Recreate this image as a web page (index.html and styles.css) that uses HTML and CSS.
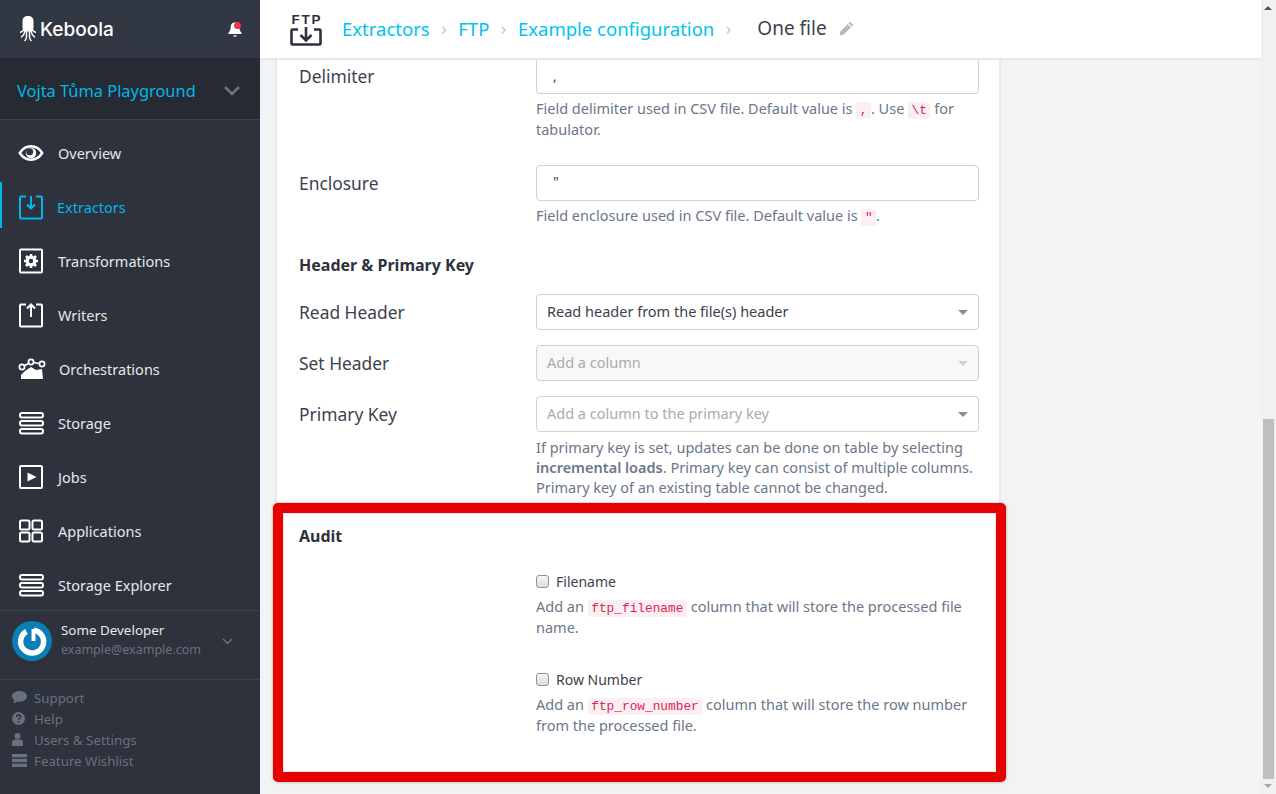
FILE: index.html
```html
<!DOCTYPE html>
<html lang="en">
<head>
    <meta charset="UTF-8">
    <title>Keboola - FTP extractor</title>
    <link rel="stylesheet" href="styles.css">
</head>
<body>
<div class="app">
    <aside class="sidebar">
        <div class="brand">
            <div class="logo">
                <svg class="octopus" width="16" height="26" viewBox="0 0 16 26" fill="#fff"><path d="M8 0c3.400 0 5.500 2 5.500 5v6.500c0 2-1 3.500-2.500 4H5c-1.500-.5-2.500-2-2.500-4V5C2.500 2 4.600 0 8 0z"/><path d="M6.500 15v6c0 1.500-.6 2.500-1.500 3.500M9.500 15v6c0 1.500 .6 2.500 1.500 3.500M5 15c-.4 2.500-1.700 4.500-3.500 6M11 15c.4 2.500 1.700 4.500 3.500 6M4 13.500c-1 1.500-2.200 2.300-3.500 2.800M12 13.500c1 1.500 2.200 2.300 3.500 2.800" fill="none" stroke="#fff" stroke-width="1.500" stroke-linecap="round"/></svg>
                <span class="logo-text">Keboola</span>
            </div>
            <span class="bell">
                <svg width="16" height="16" viewBox="0 0 16 16" fill="#fff"><path d="M8 1.500c-2.800 0-4.300 2-4.300 4.600 0 3-1 4.600-2.300 5.900v1h13.200v-1c-1.300-1.300-2.300-2.900-2.300-5.900C12.300 3.500 10.800 1.500 8 1.500z"/><path d="M6 14.500c.3 .8 1 1.300 2 1.300s1.700-.5 2-1.300z"/></svg>
                <span class="bell-dot"></span>
            </span>
        </div>
        <div class="project">
            <span>Vojta Tůma Playground</span>
            <svg width="18" height="11" viewBox="0 0 18 11" fill="none" stroke="#6b7480" stroke-width="2.600"><path d="M2 2l7 7 7-7"/></svg>
        </div>
        <nav class="nav">
            <a class="nav-item">
                <svg class="nav-icon" width="26" height="26" viewBox="0 0 26 26"><path d="M1.800 13C4.500 8.600 8.500 6.300 13 6.300s8.500 2.300 11.200 6.700c-2.700 4.400-6.700 6.700-11.200 6.700S4.500 17.400 1.800 13z" fill="none" stroke="#fff" stroke-width="2.400"/><circle cx="13" cy="13" r="5.200" fill="#fff"/><circle cx="11.700" cy="11.700" r="3.500" fill="#2d323c"/></svg>
                <span>Overview</span>
            </a>
            <a class="nav-item active">
                <svg class="nav-icon" width="26" height="26" viewBox="0 0 26 26" fill="none" stroke="#00b7ea" stroke-width="2"><path d="M8 2.500H3a1 1 0 0 0-1 1v20a1 1 0 0 0 1 1h20a1 1 0 0 0 1-1v-20a1 1 0 0 0-1-1h-5"/><path d="M13 2v12M9 10.500l4 4 4-4"/></svg>
                <span class="pull">Extractors</span>
            </a>
            <a class="nav-item">
                <svg class="nav-icon" width="26" height="26" viewBox="0 0 26 26"><rect x="2" y="1.500" width="22" height="23" rx="1" fill="none" stroke="#fff" stroke-width="2"/><circle cx="13" cy="13" r="3.800" fill="none" stroke="#fff" stroke-width="3.200"/><g stroke="#fff" stroke-width="2.600"><path d="M13 6v3M13 17v3M6 13h3M17 13h3M8 8l2 2M16 16l2 2M18 8l-2 2M10 16l-2 2"/></g></svg>
                <span>Transformations</span>
            </a>
            <a class="nav-item">
                <svg class="nav-icon" width="26" height="26" viewBox="0 0 26 26" fill="none" stroke="#fff" stroke-width="2"><path d="M8 2.500H3a1 1 0 0 0-1 1v20a1 1 0 0 0 1 1h20a1 1 0 0 0 1-1v-20a1 1 0 0 0-1-1h-5"/><path d="M13 15V2.500M9 6.500l4-4 4 4"/></svg>
                <span>Writers</span>
            </a>
            <a class="nav-item">
                <svg class="nav-icon wide" width="28" height="24" viewBox="0 0 28 24"><path d="M3 22v-4L7 14l6-4 5 3 6-1 1 10z" fill="#fff"/><path d="M4 10l9-5 11 2" fill="none" stroke="#fff" stroke-width="1.500"/><g fill="#2d323c" stroke="#fff" stroke-width="1.700"><circle cx="4" cy="10" r="2.600"/><circle cx="13" cy="5" r="2.600"/><circle cx="24" cy="7" r="2.600"/></g></svg>
                <span class="nudge">Orchestrations</span>
            </a>
            <a class="nav-item">
                <svg class="nav-icon" width="26" height="24" viewBox="0 0 26 24" fill="none" stroke="#fff" stroke-width="2"><rect x="2" y="2" width="23" height="4.500" rx="2"/><rect x="2" y="10" width="23" height="4.500" rx="2"/><rect x="2" y="18" width="23" height="4.500" rx="2"/></svg>
                <span>Storage</span>
            </a>
            <a class="nav-item">
                <svg class="nav-icon" width="26" height="26" viewBox="0 0 26 26"><rect x="2" y="2" width="22" height="22" rx="1" fill="none" stroke="#fff" stroke-width="2"/><path d="M9.500 8.500l9 4.500-9 4.500z" fill="#fff"/></svg>
                <span>Jobs</span>
            </a>
            <a class="nav-item">
                <svg class="nav-icon" width="26" height="24" viewBox="0 0 26 24" fill="none" stroke="#fff" stroke-width="2"><rect x="2" y="1.500" width="9.500" height="9" rx="1.500"/><rect x="14.500" y="1.500" width="9.500" height="9" rx="1.500"/><rect x="2" y="13.500" width="9.500" height="9" rx="1.500"/><rect x="14.500" y="13.500" width="9.500" height="9" rx="1.500"/></svg>
                <span>Applications</span>
            </a>
            <a class="nav-item">
                <svg class="nav-icon" width="26" height="24" viewBox="0 0 26 24" fill="none" stroke="#fff" stroke-width="2"><rect x="2" y="2" width="23" height="4.500" rx="2"/><rect x="2" y="10" width="23" height="4.500" rx="2"/><rect x="2" y="18" width="23" height="4.500" rx="2"/></svg>
                <span>Storage Explorer</span>
            </a>
        </nav>
        <div class="user">
            <svg class="avatar" width="40" height="40" viewBox="0 0 40 40"><circle cx="20" cy="20" r="20" fill="#0a7fb5"/><path d="M14.500 10.500A11.500 11.500 0 1 0 22 9.200" fill="none" stroke="#fff" stroke-width="5.500"/><path d="M21.500 8v12" stroke="#fff" stroke-width="4"/></svg>
            <div class="user-info">
                <div class="user-name">Some Developer</div>
                <div class="user-mail">example@example.com</div>
            </div>
            <svg class="user-caret" width="11" height="7" viewBox="0 0 11 7" fill="none" stroke="#6b7480" stroke-width="1.400"><path d="M1 1l4.500 4.500L10 1"/></svg>
        </div>
        <div class="links">
            <a class="link"><svg width="15" height="13" viewBox="0 0 15 13" fill="#68717d"><path d="M7.500 0C3.400 0 0 2.300 0 5.300c0 1.600 1 3 2.500 4-.2 1.100-.7 2.200-1.400 3 1.600-.2 3-.9 4-1.800.8.100 1.600.2 2.400.2 4.100 0 7.500-2.400 7.500-5.400S11.600 0 7.500 0z"/></svg>Support</a>
            <a class="link"><svg width="15" height="13" viewBox="0 0 15 13"><circle cx="6.500" cy="6.500" r="6.500" fill="#68717d"/><path d="M4.500 5c.1-1.300 1-1.900 2.100-1.900s2 .7 2 1.700c0 1.500-2 1.500-2 2.900" fill="none" stroke="#2d323c" stroke-width="1.500"/><rect x="5.800" y="9" width="1.600" height="1.600" fill="#2d323c"/></svg>Help</a>
            <a class="link"><svg width="15" height="13" viewBox="0 0 15 13" fill="#68717d"><circle cx="5.500" cy="3" r="3"/><path d="M0 13V9.500C0 7.500 1.500 6.500 3 6.500h5c1.500 0 3 1 3 3V13z"/></svg>Users &amp; Settings</a>
            <a class="link"><svg width="15" height="13" viewBox="0 0 15 13" fill="#68717d"><rect width="15" height="3.400"/><rect y="4.800" width="15" height="3.400"/><rect y="9.600" width="15" height="3.400"/></svg>Feature Wishlist</a>
        </div>
    </aside>

    <div class="main">
        <header class="topbar">
            <div class="ftp-icon">
                <span class="ftp-label">FTP</span>
                <svg width="32" height="19" viewBox="0 0 32 19" fill="none" stroke="#2d323c" stroke-width="2.600"><path d="M8 2.500H2.500a1 1 0 0 0-1 1v13a1 1 0 0 0 1 1h27a1 1 0 0 0 1-1v-13a1 1 0 0 0-1-1H24"/><path d="M16 0v12M10.500 8l5.500 5.500L21.500 8"/></svg>
            </div>
            <a class="crumb">Extractors</a>
            <span class="sep">›</span>
            <a class="crumb">FTP</a>
            <span class="sep">›</span>
            <a class="crumb">Example configuration</a>
            <span class="sep last">›</span>
            <span class="current">One file</span>
            <svg class="pencil" width="15" height="15" viewBox="0 0 15 15" fill="#b5b8bc"><path d="M11 .8l3.200 3.200-1.500 1.500-3.200-3.200zM8.600 3.200l3.200 3.200-7.400 7.400L.6 14.500l.7-3.900z"/></svg>
        </header>

        <div class="scroller">
            <div class="panel">
                <div class="form-row clipped">
                    <label class="row-label">Delimiter</label>
                    <div class="control">
                        <div class="input no-top">,</div>
                        <p class="help">Field delimiter used in CSV file. Default value is <code>,</code>. Use <code>\t</code> for tabulator.</p>
                    </div>
                </div>
                <div class="form-row last-field">
                    <label class="row-label">Enclosure</label>
                    <div class="control">
                        <div class="input">"</div>
                        <p class="help">Field enclosure used in CSV file. Default value is <code>"</code>.</p>
                    </div>
                </div>

                <h3 class="section-title">Header &amp; Primary Key</h3>

                <div class="form-row tight">
                    <label class="row-label">Read Header</label>
                    <div class="control">
                        <div class="select">Read header from the file(s) header</div>
                    </div>
                </div>
                <div class="form-row tight">
                    <label class="row-label">Set Header</label>
                    <div class="control">
                        <div class="select disabled">Add a column</div>
                    </div>
                </div>
                <div class="form-row tight">
                    <label class="row-label">Primary Key</label>
                    <div class="control">
                        <div class="select placeholder">Add a column to the primary key</div>
                        <p class="help narrow">If primary key is set, updates can be done on table by selecting <b>incremental loads</b>. Primary key can consist of multiple columns. Primary key of an existing table cannot be changed.</p>
                    </div>
                </div>

                <h3 class="section-title audit">Audit</h3>

                <div class="form-row check-row">
                    <div class="row-label"></div>
                    <div class="control">
                        <div class="check"><span class="box"></span>Filename</div>
                        <p class="help">Add an <code>ftp_filename</code> column that will store the processed file name.</p>
                    </div>
                </div>
                <div class="form-row check-row second">
                    <div class="row-label"></div>
                    <div class="control">
                        <div class="check"><span class="box"></span>Row Number</div>
                        <p class="help">Add an <code>ftp_row_number</code> column that will store the row number from the processed file.</p>
                    </div>
                </div>
            </div>
            <div class="highlight"></div>
        </div>
    </div>

    <div class="scrollbar">
        <span class="arrow up"></span>
        <div class="track"><div class="thumb"></div></div>
        <span class="arrow down"></span>
    </div>
</div>
</body>
</html>
```

FILE: styles.css
```css
* {
    box-sizing: border-box;
}
html, body {
    margin: 0;
    padding: 0;
    height: 100%;
    overflow: hidden;
}
body {
    font-family: "Noto Sans", sans-serif;
    font-size: 14px;
    color: #3b424d;
    background-color: #f2f3f5;
}
.app {
    display: flex;
    height: 794px;
}

/* sidebar */
.sidebar {
    width: 260px;
    flex: none;
    background-color: #2d323c;
    display: flex;
    flex-direction: column;
}
.brand {
    height: 58px;
    background-color: #323843;
    display: flex;
    align-items: center;
    justify-content: space-between;
    padding: 0 16px 0 20px;
}
.logo {
    display: flex;
    align-items: center;
    gap: 4px;
}
.logo-text {
    font-family: Inter, sans-serif;
    font-size: 19px;
    font-weight: 500;
    color: #fff;
}
.bell {
    position: relative;
    display: flex;
    margin-right: 1px;
}
.bell-dot {
    position: absolute;
    top: 1px;
    right: 2px;
    width: 7px;
    height: 7px;
    border-radius: 50%;
    background-color: #f4364c;
}
.project {
    height: 62px;
    background-color: #262a33;
    border-bottom: 1px solid #3d424c;
    display: flex;
    align-items: center;
    justify-content: space-between;
    padding: 3px 19px 0 17px;
    font-size: 16.400px;
    color: #00b7ea;
}
.nav {
    padding-top: 6px;
    height: 491px;
    border-bottom: 1px solid #3d424c;
}
.nav-item {
    height: 54px;
    display: flex;
    align-items: center;
    gap: 14px;
    padding-left: 18px;
    font-size: 14.500px;
    color: #e6e8ea;
}
.nav-item.active {
    color: #00b7ea;
    background: linear-gradient(#00b7ea, #00b7ea) no-repeat 0 2px / 2px 46px;
}
.nav-icon {
    flex: none;
}
.nav-icon.wide {
    margin-right: -1px;
}
.pull {
    margin-left: -1px;
}
.user {
    height: 69px;
    border-bottom: 1px solid #3d424c;
    display: flex;
    align-items: flex-start;
    padding: 9px 12px 0;
}
.avatar {
    margin-top: 1px;
}
.user-info {
    margin-left: 9px;
    flex: 1;
}
.user-name {
    font-size: 13.400px;
    line-height: 20px;
    color: #e6e8ea;
}
.user-mail {
    font-size: 12.500px;
    line-height: 19px;
    color: #68717d;
}
.user-caret {
    margin: 18px 15px 0 0;
}
.links {
    padding-top: 7px;
}
.link {
    display: flex;
    align-items: center;
    gap: 7px;
    padding-left: 12px;
    height: 21px;
    font-size: 13.300px;
    color: #68717d;
}

/* main column */
.main {
    flex: 1;
    min-width: 0;
    display: flex;
    flex-direction: column;
}
.topbar {
    height: 60px;
    flex: none;
    background-color: #fff;
    border-bottom: 2px solid #e8e9ec;
    display: flex;
    align-items: center;
    padding: 0 0 2px 30px;
    font-size: 18.500px;
}
.ftp-icon {
    width: 32px;
    display: flex;
    flex-direction: column;
    align-items: center;
    gap: 2px;
    margin-right: 20px;
    margin-top: 4px;
}
.ftp-label {
    font-family: "Liberation Sans", sans-serif;
    font-size: 13.500px;
    font-weight: 700;
    line-height: 11px;
    letter-spacing: 1.800px;
    margin-right: -1.800px;
    color: #2d323c;
}
.crumb {
    color: #00c3f0;
}
.sep {
    color: #c3c6ca;
    margin: 0 11.500px;
    font-size: 18px;
}
.sep.last {
    margin-right: 26px;
}
.current {
    color: #3b424d;
    font-size: 19px;
}
.pencil {
    margin-left: 12px;
}

.scroller {
    position: relative;
    flex: 1;
    overflow: hidden;
}
.panel {
    width: 726px;
    margin-left: 15px;
    height: 712px;
    background-color: #fff;
    border-left: 2px solid #e8e9ec;
    border-right: 2px solid #e8e9ec;
    padding: 0 22px;
}
.form-row {
    display: grid;
    grid-template-columns: 237px 443px;
    margin-bottom: 25px;
}
.form-row.last-field {
    margin-bottom: 28px;
}
.form-row.tight {
    margin-bottom: 15px;
}
.row-label {
    font-size: 17.400px;
    line-height: 36px;
    color: #3b424d;
}
.clipped .row-label {
    line-height: 33px;
}
.input {
    height: 36px;
    border: 1px solid #cfd2d6;
    border-radius: 4px;
    padding: 0 16px;
    line-height: 32px;
    font-size: 14px;
    background-color: #fff;
}
.input.no-top {
    height: 34px;
    border-top: none;
    border-radius: 0 0 4px 4px;
}
.help {
    margin: 4px 0 0;
    font-size: 14.500px;
    line-height: 21px;
    color: #6b7789;
}
.help.narrow {
    line-height: 20px;
    margin-top: 5px;
}
.help b {
    font-weight: 600;
}
code {
    font-family: "Liberation Mono", monospace;
    font-size: 12.800px;
    line-height: 1;
    color: #dd1f55;
    background-color: #fbeff2;
    border-radius: 3px;
    padding: 1px 3.500px;
}
.section-title {
    margin: 0;
    font-size: 16px;
    font-weight: 700;
    line-height: 22px;
    color: #2d323c;
    padding-bottom: 18px;
}
.select {
    position: relative;
    height: 36px;
    border: 1px solid #cfd2d6;
    border-radius: 4px;
    padding: 0 10px;
    line-height: 33px;
    font-size: 14.500px;
    color: #3b424d;
    background-color: #fff;
}
.select::after {
    content: "";
    position: absolute;
    right: 10px;
    top: 15px;
    border-top: 5px solid #8a8d91;
    border-left: 5px solid transparent;
    border-right: 5px solid transparent;
}
.select.placeholder {
    color: #a8abaf;
}
.select.disabled {
    color: #a8abaf;
    background-color: #f8f8f8;
}
.select.disabled::after {
    border-top-color: #cfd1d4;
}
.section-title.audit {
    margin-top: 28px;
    padding-bottom: 0;
}
.check-row {
    margin: 24px 0 0;
}
.check-row.second {
    margin-top: 31px;
}
.check-row .help {
    margin-top: 5px;
}
.check {
    display: flex;
    align-items: center;
    gap: 7px;
    height: 20px;
    color: #3b424d;
}
.box {
    width: 13px;
    height: 13px;
    border: 1px solid #8f9399;
    border-radius: 3px;
    background: linear-gradient(#f7f7f7, #dcdcdc);
}
.highlight {
    position: absolute;
    left: 13px;
    top: 443px;
    width: 733px;
    height: 279px;
    border: 10px solid #e60000;
    border-radius: 5px;
    box-shadow: 0 0 3px rgba(0, 0, 0, 0.35), inset 0 0 2px rgba(0, 0, 0, 0.3);
}

/* scrollbar */
.scrollbar {
    width: 15px;
    flex: none;
    background-color: #f1f1f1;
    display: flex;
    flex-direction: column;
    align-items: center;
    position: relative;
}
.track {
    flex: 1;
    width: 100%;
    position: relative;
}
.thumb {
    position: absolute;
    left: 2px;
    top: 419px;
    width: 11px;
    height: 360px;
    background-color: #bfbfbf;
}
.arrow {
    position: absolute;
    left: 3px;
    border-left: 4px solid transparent;
    border-right: 4px solid transparent;
}
.arrow.up {
    top: 6px;
    border-bottom: 4px solid #555;
}
.arrow.down {
    bottom: 6px;
    border-top: 4px solid #a5a5a5;
}
```
